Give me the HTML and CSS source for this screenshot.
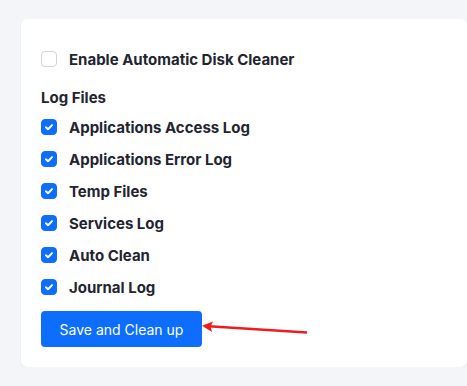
FILE: index.html
```html
<!DOCTYPE html>
<html lang="en">
<head>
  <meta charset="UTF-8" />
  <title>Disk Cleaner</title>
  <link rel="stylesheet" href="styles.css">
</head>
<body>
  <div class="card">
    <label class="check-row">
      <span class="box"></span>
      <span>Enable Automatic Disk Cleaner</span>
    </label>
    <h4 class="section-title">Log Files</h4>
    <label class="check-row"><span class="box checked"><svg viewBox="0 0 16 16"><path d="M4.5 8.3l2.4 2.3 4.6-4.8"/></svg></span><span>Applications Access Log</span></label>
    <label class="check-row"><span class="box checked"><svg viewBox="0 0 16 16"><path d="M4.5 8.3l2.4 2.3 4.6-4.8"/></svg></span><span>Applications Error Log</span></label>
    <label class="check-row"><span class="box checked"><svg viewBox="0 0 16 16"><path d="M4.5 8.3l2.4 2.3 4.6-4.8"/></svg></span><span>Temp Files</span></label>
    <label class="check-row"><span class="box checked"><svg viewBox="0 0 16 16"><path d="M4.5 8.3l2.4 2.3 4.6-4.8"/></svg></span><span>Services Log</span></label>
    <label class="check-row"><span class="box checked"><svg viewBox="0 0 16 16"><path d="M4.5 8.3l2.4 2.3 4.6-4.8"/></svg></span><span>Auto Clean</span></label>
    <label class="check-row"><span class="box checked"><svg viewBox="0 0 16 16"><path d="M4.5 8.3l2.4 2.3 4.6-4.8"/></svg></span><span>Journal Log</span></label>
    <div class="actions">
      <button class="btn-primary">Save and Clean up</button>
      <!-- annotation arrow -->
      <svg class="arrow" viewBox="0 0 110 16" width="110" height="16">
        <path d="M106 11.5L4 5" stroke="#ee1c1c" stroke-width="2.4" fill="none"/>
        <path d="M1 4.8L12 0.4 9.5 5.5 11 11z" fill="#ee1c1c"/>
      </svg>
    </div>
  </div>
</body>
</html>
```
FILE: styles.css
```css
* { box-sizing: border-box; }
body {
  margin: 0;
  background: #f4f5f8;
  font-family: 'Inter', 'DejaVu Sans', sans-serif;
  color: #222530;
}
.card {
  margin: 19px 0 0 21px;
  background: #fff;
  border-radius: 6px;
  box-shadow: 0 1px 2px rgba(0, 0, 0, 0.08);
  padding: 24px 20px 20px;
  height: 348px;
}
.check-row {
  display: flex;
  align-items: center;
  height: 32px;
  font-size: 15px;
  font-weight: 700;
  cursor: pointer;
}
.box {
  width: 16px;
  height: 16px;
  border: 1px solid #d0d3da;
  border-radius: 4px;
  margin-right: 12px;
  flex-shrink: 0;
  display: flex;
}
.box.checked {
  background: #0d6efd;
  border-color: #0d6efd;
}
.box svg {
  width: 14px;
  height: 14px;
  fill: none;
  stroke: #fff;
  stroke-width: 2.2;
  stroke-linecap: round;
  stroke-linejoin: round;
}
.section-title {
  margin: 11px 0 1px;
  height: 24px;
  line-height: 24px;
  font-size: 15px;
  font-weight: 700;
}
.actions {
  position: relative;
  margin-top: 8px;
}
.btn-primary {
  width: 161px;
  height: 36px;
  background: #0d6efd;
  color: #fff;
  border: none;
  border-radius: 4px;
  font-family: 'Inter', sans-serif;
  font-size: 14px;
  cursor: pointer;
}
.arrow {
  position: absolute;
  left: 160px;
  top: 10px;
}
```
